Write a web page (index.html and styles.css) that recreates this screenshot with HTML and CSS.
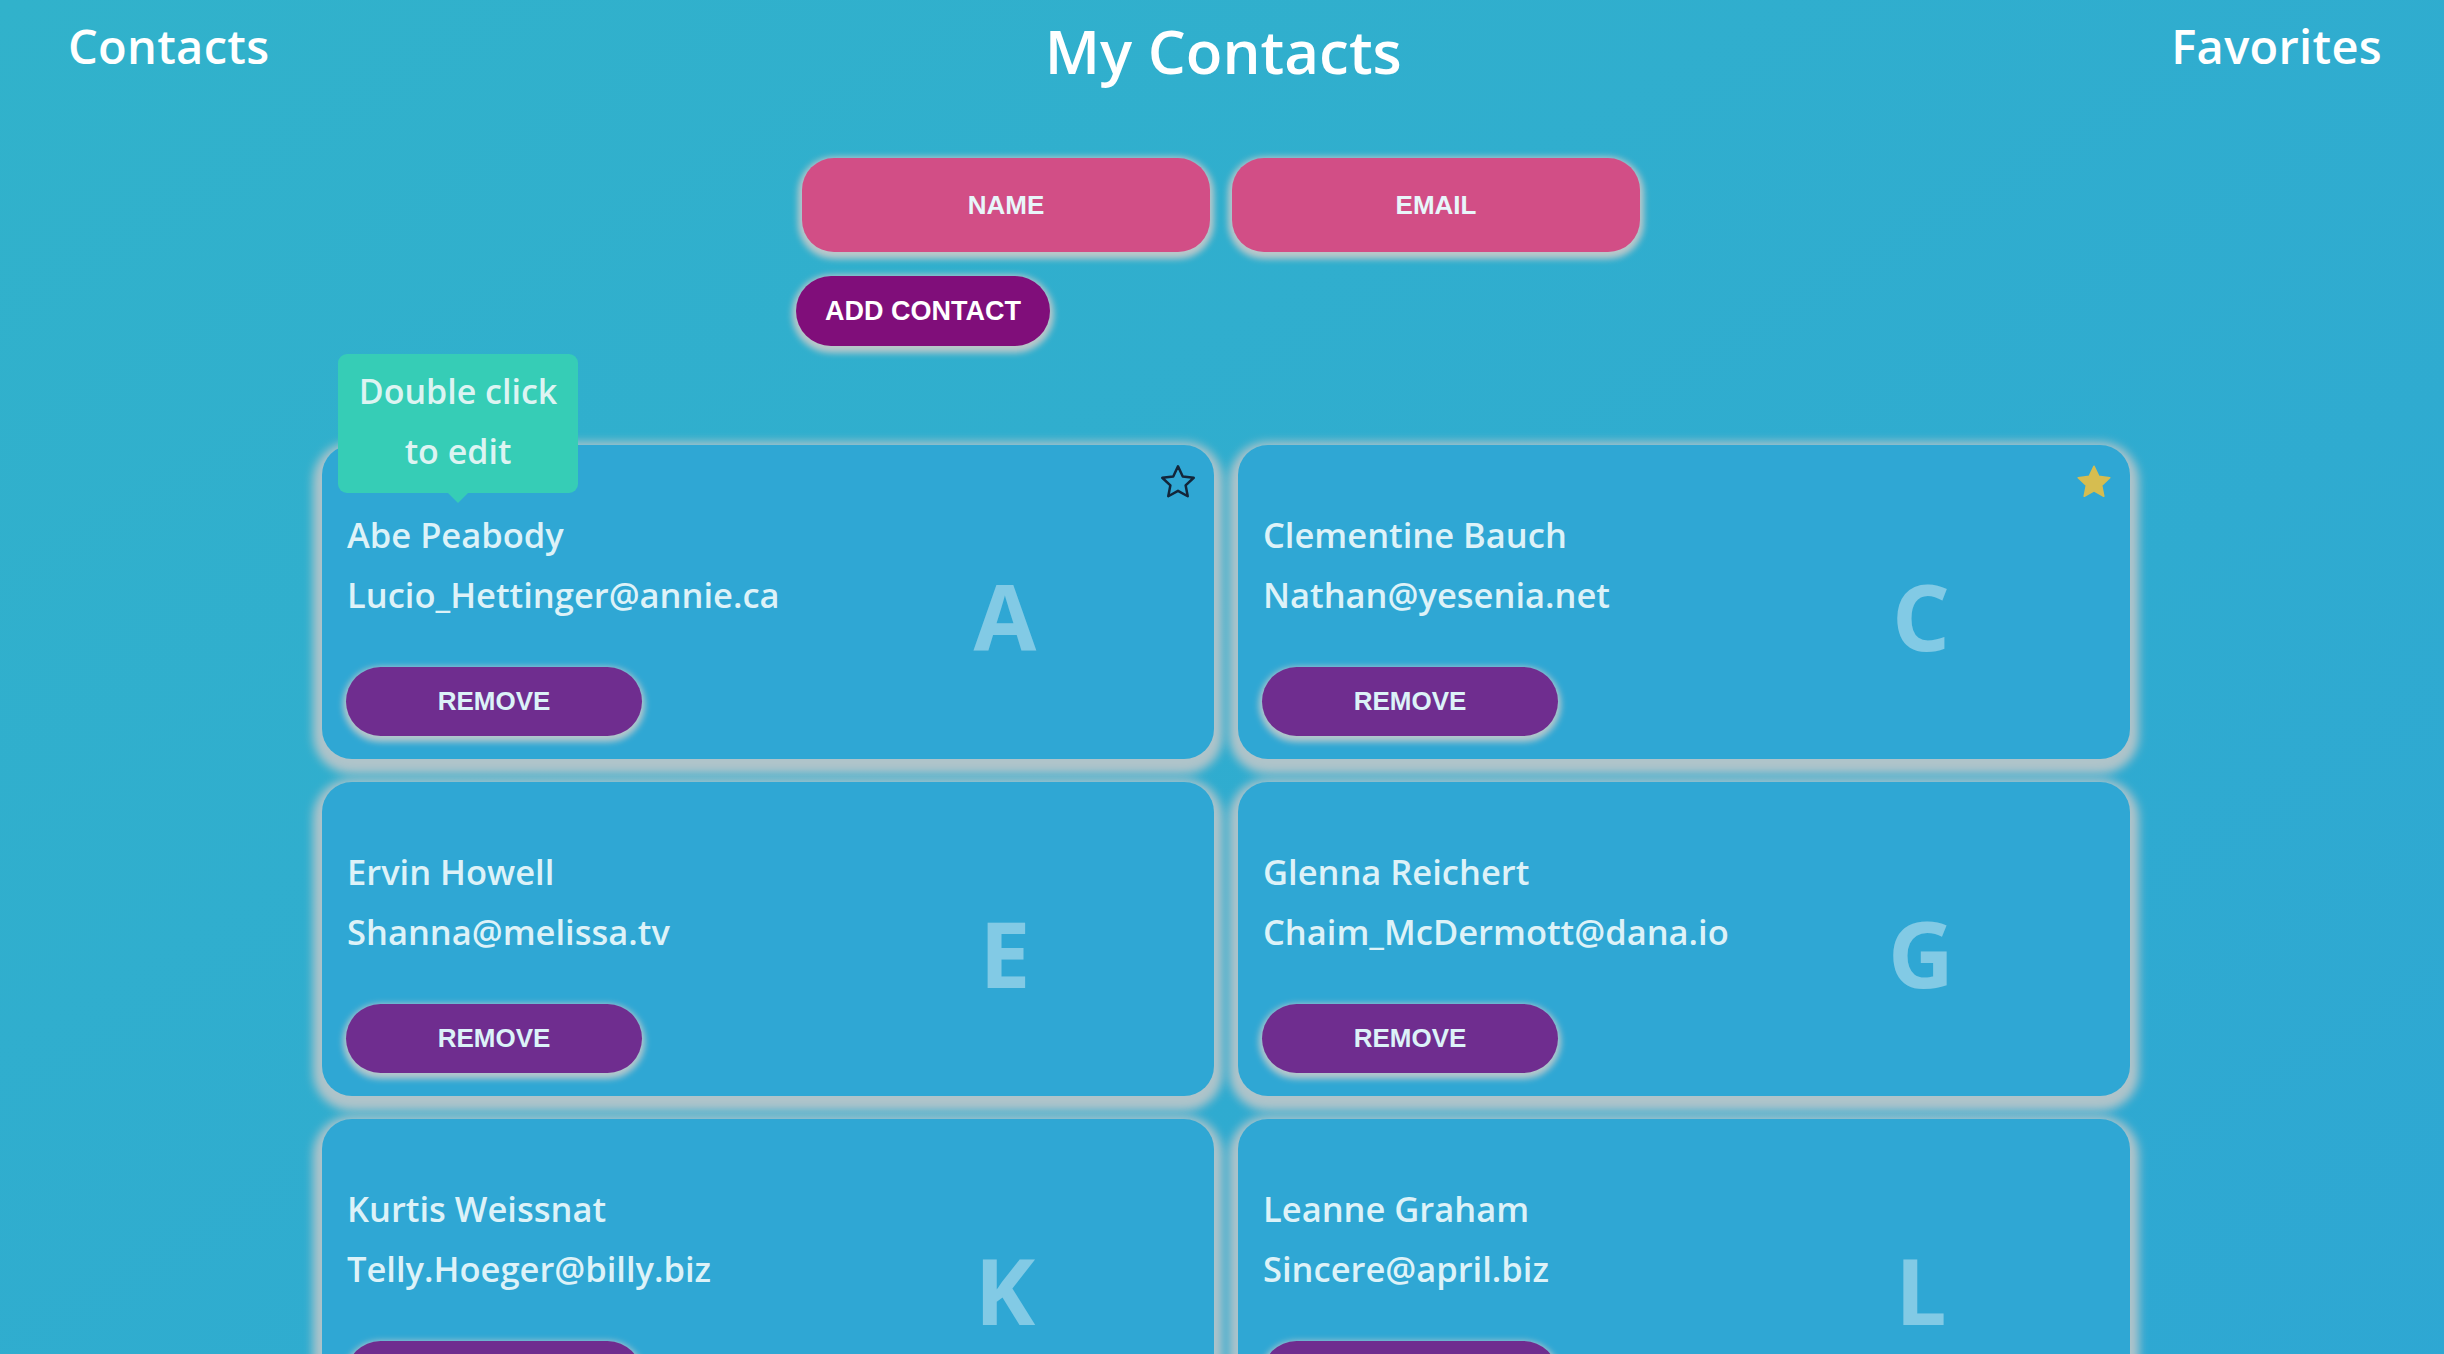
FILE: index.html
```html
<!DOCTYPE html>
<html lang="en">
<head>
<meta charset="utf-8">
<title>My Contacts</title>
<link rel="stylesheet" href="styles.css">
</head>
<body>
<header class="topbar">
  <a class="nav-link">Contacts</a>
  <h1 class="title">My Contacts</h1>
  <a class="nav-link">Favorites</a>
</header>

<form class="add-form">
  <div class="fields">
    <input class="field" type="text" placeholder="NAME">
    <input class="field" type="text" placeholder="EMAIL">
  </div>
  <button class="add-btn" type="button">ADD CONTACT</button>
</form>

<main class="cards">
  <div class="card">
    <div class="tooltip">Double click<br>to edit</div>
    <svg class="star star-empty" viewBox="0 0 24 24"><path d="M12 2.6l2.85 6.05 6.6.8-4.88 4.55 1.27 6.55L12 17.3l-5.84 3.25 1.27-6.55L2.55 9.45l6.6-.8z"/></svg>
    <div class="info">
      <div class="name">Abe Peabody</div>
      <div class="email">Lucio_Hettinger@annie.ca</div>
      <button class="remove" type="button">REMOVE</button>
    </div>
    <div class="initial">A</div>
  </div>
  <div class="card">
    <svg class="star star-full" viewBox="0 0 24 24"><path d="M12 2.6l2.85 6.05 6.6.8-4.88 4.55 1.27 6.55L12 17.3l-5.84 3.25 1.27-6.55L2.55 9.45l6.6-.8z"/></svg>
    <div class="info">
      <div class="name">Clementine Bauch</div>
      <div class="email">Nathan@yesenia.net</div>
      <button class="remove" type="button">REMOVE</button>
    </div>
    <div class="initial">C</div>
  </div>
  <div class="card">
    <div class="info">
      <div class="name">Ervin Howell</div>
      <div class="email">Shanna@melissa.tv</div>
      <button class="remove" type="button">REMOVE</button>
    </div>
    <div class="initial">E</div>
  </div>
  <div class="card">
    <div class="info">
      <div class="name">Glenna Reichert</div>
      <div class="email">Chaim_McDermott@dana.io</div>
      <button class="remove" type="button">REMOVE</button>
    </div>
    <div class="initial">G</div>
  </div>
  <div class="card">
    <div class="info">
      <div class="name">Kurtis Weissnat</div>
      <div class="email">Telly.Hoeger@billy.biz</div>
      <button class="remove" type="button">REMOVE</button>
    </div>
    <div class="initial">K</div>
  </div>
  <div class="card">
    <div class="info">
      <div class="name">Leanne Graham</div>
      <div class="email">Sincere@april.biz</div>
      <button class="remove" type="button">REMOVE</button>
    </div>
    <div class="initial">L</div>
  </div>
</main>
</body>
</html>
```

FILE: styles.css
```css
* { box-sizing: border-box; }

html, body {
  margin: 0;
  padding: 0;
}

body {
  min-height: 100vh;
  overflow: hidden;
  background: linear-gradient(to bottom right, #31b2cb, #2ea7d3);
  font-family: "Open Sans", "Noto Sans", sans-serif;
  color: #ffffff;
}

.topbar {
  display: flex;
  justify-content: space-between;
  align-items: flex-start;
  padding: 10px 62px 0 68px;
}

.nav-link {
  margin-top: 4px;
  font-size: 47px;
  line-height: 65px;
  font-weight: 600;
  letter-spacing: 0.3px;
  color: #ffffff;
  text-decoration: none;
}

.title {
  margin: 0;
  font-size: 60px;
  line-height: 82px;
  font-weight: 600;
  padding-left: 6px;
}

.add-form {
  width: 852px;
  margin: 66px auto 0;
}

.fields {
  display: flex;
  gap: 22px;
  padding-left: 6px;
}

.field {
  width: 408px;
  height: 94px;
  border: none;
  border-radius: 32px;
  background: #d24e86;
  box-shadow: 0 3px 6px 4px #bac8ca;
  text-align: center;
  font-family: "Liberation Sans", Arial, sans-serif;
  font-weight: 700;
  font-size: 26px;
  color: #e8f6fa;
  outline: none;
}

.field::placeholder {
  color: #e8f6fa;
  opacity: 1;
}

.add-btn {
  display: block;
  margin-top: 24px;
  width: 254px;
  height: 70px;
  border: none;
  border-radius: 35px;
  background: #800e7a;
  box-shadow: 0 3px 6px 4px #bac8ca;
  font-family: "Liberation Sans", Arial, sans-serif;
  font-weight: 700;
  font-size: 27px;
  color: #ffffff;
  padding: 0;
}

.cards {
  display: grid;
  grid-template-columns: 892px 892px;
  column-gap: 24px;
  row-gap: 23px;
  width: 1808px;
  margin: 99px 0 0 calc(50% - 900px);
}

.card {
  position: relative;
  display: grid;
  grid-template-columns: 599px 120px;
  height: 314px;
  padding: 60px 0 23px 24px;
  border-radius: 30px;
  background: #2fa7d4;
  box-shadow: 0 6px 10px 9px #afc4ca;
}

.info {
  display: flex;
  flex-direction: column;
  align-items: flex-start;
}

.name, .email {
  font-size: 34.5px;
  line-height: 60px;
  font-weight: 600;
  color: #ddf2f8;
  padding-left: 1px;
  white-space: nowrap;
}

.remove {
  margin-top: 42px;
  width: 296px;
  height: 69px;
  border: none;
  border-radius: 35px;
  background: #6f2d8f;
  box-shadow: 0 3px 6px 3px #b6c8cc;
  font-family: "Liberation Sans", Arial, sans-serif;
  font-weight: 700;
  font-size: 26px;
  color: #dcf2f8;
  padding: 0;
}

.initial {
  align-self: start;
  margin-top: 66px;
  text-align: center;
  font-size: 91px;
  line-height: 91px;
  font-weight: 700;
  color: rgba(255, 255, 255, 0.4);
}

.star {
  position: absolute;
  top: 17px;
  right: 15px;
  width: 42px;
  height: 40px;
}

.star-empty path {
  fill: none;
  stroke: #13263a;
  stroke-width: 1.5;
  stroke-linejoin: round;
}

.star-full path {
  fill: #d6bd50;
  stroke: #d6bd50;
  stroke-width: 1;
  stroke-linejoin: round;
}

.tooltip {
  position: absolute;
  left: 16px;
  top: -91px;
  width: 240px;
  height: 139px;
  padding-top: 7px;
  border-radius: 9px;
  background: #36cdb6;
  text-align: center;
  font-size: 34px;
  line-height: 60px;
  font-weight: 600;
  color: #ddf4f2;
  z-index: 2;
}

.tooltip::after {
  content: "";
  position: absolute;
  left: 50%;
  bottom: -10px;
  margin-left: -10px;
  border-left: 10px solid transparent;
  border-right: 10px solid transparent;
  border-top: 10px solid #36cdb6;
}
```
